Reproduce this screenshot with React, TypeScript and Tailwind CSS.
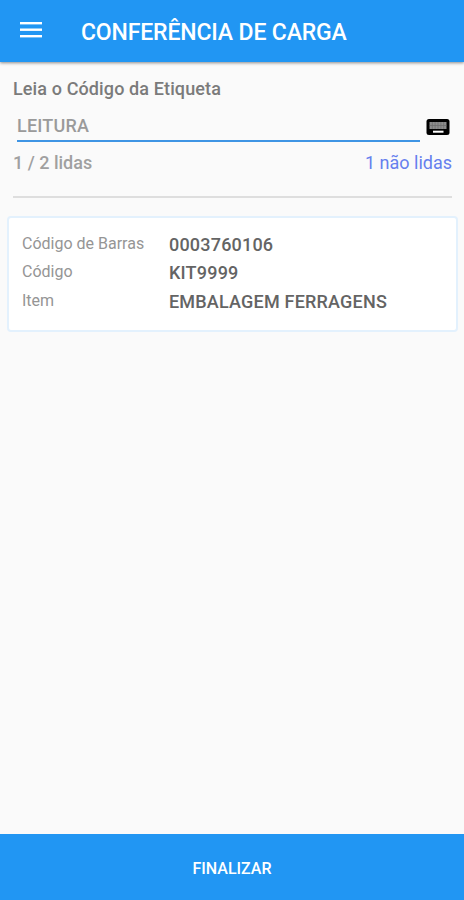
const fields = [
    { label: "Código de Barras", value: "0003760106" },
    { label: "Código", value: "KIT9999" },
    { label: "Item", value: "EMBALAGEM FERRAGENS" },
];

function MenuIcon() {
    return (
        <svg width="22" height="16" viewBox="0 0 22 16" fill="currentColor">
            <rect y="0" width="22" height="2.4" />
            <rect y="6.5" width="22" height="2.4" />
            <rect y="13" width="22" height="2.4" />
        </svg>
    );
}

function KeyboardIcon() {
    return (
        <svg width="24" height="16" viewBox="0 0 24 16">
            <rect x="0.5" width="23" height="16" rx="2.5" fill="#000" />
            <rect x="3.5" y="3" width="17" height="7" fill="#8c8c8c" />
            {/* gaps between the keys */}
            <path
                d="M6.3 3v7M9.1 3v7M12 3v7M14.9 3v7M17.7 3v7M3.5 6.5h17"
                stroke="#666"
                strokeWidth="0.6"
            />
            <rect x="7" y="11.7" width="10.5" height="2" fill="#fff" />
        </svg>
    );
}

export default function App() {
    return (
        <div className="flex flex-col h-screen bg-[#fafafa] font-[Roboto,sans-serif]">
            {/* App bar */}
            <header className="flex items-center h-[62px] shrink-0 pl-5 bg-[#2196f3] text-white shadow-[0_1px_3px_rgba(0,0,0,0.45)]">
                <button type="button" aria-label="Menu" className="mr-[39px] mb-0.5">
                    <MenuIcon />
                </button>
                <h1 className="pt-[3px] text-[23px] font-medium leading-7 tracking-[-0.15px]">CONFERÊNCIA DE CARGA</h1>
            </header>

            <main className="flex-1">
                {/* Label reading */}
                <section className="ml-[13px] mr-3 pt-[15px] border-b-2 border-[#dedede] h-[136px]">
                    <p className="text-lg leading-6 font-medium tracking-[0.12px] text-[#7b7b7b]">Leia o Código da Etiqueta</p>
                    <div className="flex items-start pl-1 mt-[11px]">
                        <div className="w-[403px] h-[30px] border-b-2 border-[#3f95e4] text-lg leading-7 font-medium tracking-[0.2px] text-[#9a9a9a]">
                            LEITURA
                        </div>
                        <button type="button" aria-label="Teclado" className="ml-1.5 mt-[7px]">
                            <KeyboardIcon />
                        </button>
                    </div>
                    <div className="flex justify-between mt-[9px] text-lg leading-6">
                        <span className="font-medium text-[#a0a0a0]">1 / 2 lidas</span>
                        <span className="text-[#6680ee]">1 não lidas</span>
                    </div>
                </section>

                {/* Item card */}
                <section className="ml-[7px] mr-1.5 mt-[18px] h-[116px] pl-[13px] pt-3.5 bg-white border-2 border-[#e3f1fd] rounded">
                    {fields.map((field) => (
                        <div key={field.label} className="flex h-[28.3px]">
                            <span className="w-[147px] text-base leading-6 text-[#959595]">{field.label}</span>
                            <span className="text-lg leading-[26px] font-medium tracking-[0.2px] text-[#646464]">{field.value}</span>
                        </div>
                    ))}
                </section>
            </main>

            <button type="button" className="h-[66px] shrink-0 pt-1 bg-[#2196f3] text-base font-medium text-white">
                FINALIZAR
            </button>
        </div>
    );
}
